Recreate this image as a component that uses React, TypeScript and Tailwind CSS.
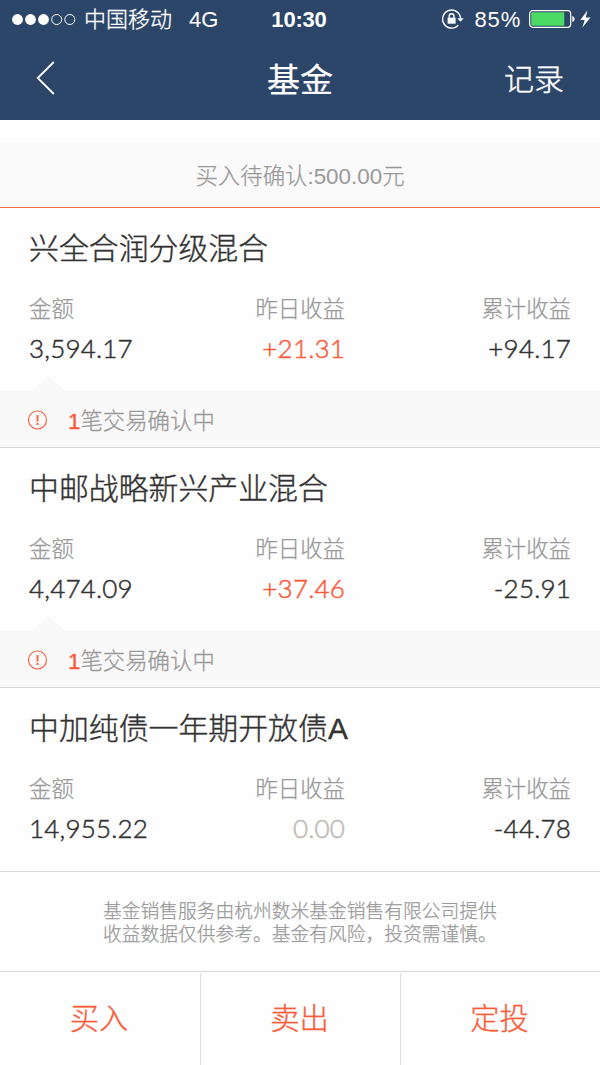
type Fund = {
  name: string;
  amount: string;
  yesterday: string;
  total: string;
  pending?: number;
};

const funds: Fund[] = [
  { name: "兴全合润分级混合", amount: "3,594.17", yesterday: "+21.31", total: "+94.17", pending: 1 },
  { name: "中邮战略新兴产业混合", amount: "4,474.09", yesterday: "+37.46", total: "-25.91", pending: 1 },
  { name: "中加纯债一年期开放债A", amount: "14,955.22", yesterday: "0.00", total: "-44.78" },
];

const StatusBar = () => {
  return (
    <div className="relative flex h-10 items-center justify-between pl-3 pr-[9px] text-[22px] leading-10">
      <div className="flex items-center">
        <svg width="64" height="12" viewBox="0 0 64 12" fill="white">
          <circle cx="5.5" cy="5.5" r="5.4" />
          <circle cx="18.5" cy="5.5" r="5.4" />
          <circle cx="31.5" cy="5.5" r="5.4" />
          <circle cx="44.7" cy="5.5" r="5" fill="none" stroke="white" />
          <circle cx="57.8" cy="5.5" r="5" fill="none" stroke="white" />
        </svg>
        <span className="ml-2 font-light [-webkit-text-stroke:0.3px]">中国移动</span>
        <span className="ml-[17px]">4G</span>
      </div>
      <div className="absolute inset-x-0 -ml-0.5 text-center font-bold -tracking-[0.2px]">10:30</div>
      <div className="flex items-center">
        <svg className="-ml-0.5 overflow-visible" width="22" height="20" viewBox="0 0 22 20" fill="none" stroke="white" strokeWidth="1.4">
          <path d="M18.6 8.5A9 9 0 1 0 16.3 15.1" />
          <path d="M15.3 8.2h6.4l-3.2 3.6z" fill="white" stroke="none" />
          <rect x="5.6" y="7.7" width="8" height="6" fill="white" stroke="none" />
          <path d="M7.2 8V6.2a2.4 2.4 0 0 1 4.8 0V8" />
        </svg>
        <span className="ml-[11px] mr-0.5 tracking-[0.8px]">85%</span>
        <svg className="ml-[6px]" width="62" height="20" viewBox="0 0 62 20">
          <rect x="0.7" y="0.7" width="41" height="16.6" rx="3" fill="none" stroke="white" strokeWidth="1.2" />
          <rect x="2.3" y="2.3" width="33" height="13.4" rx="1" fill="#4cd964" />
          <path d="M43.3 6c3 .8 3 5.2 0 6z" fill="white" />
          <path d="M58.4 0.5 51.3 10h4.4l-2.3 7.5L61.5 7.4h-4.8z" fill="white" />
        </svg>
      </div>
    </div>
  );
};

const Header = () => {
  return (
    <div className="h-[120px] bg-[#2c466a] text-white">
      <StatusBar />
      <div className="grid h-20 grid-cols-3 items-center px-9">
        <svg className="-mt-1" width="19" height="34" viewBox="0 0 19 34" fill="none" stroke="white" strokeWidth="1.8">
          <path d="M17.8 1 1.7 17l16.1 16" />
        </svg>
        <div className="pt-0.5 text-center text-[33px] font-normal leading-10 [-webkit-text-stroke:0.2px]">基金</div>
        <div className="text-right text-[30px] leading-10 font-light [-webkit-text-stroke:0.4px]">记录</div>
      </div>
    </div>
  );
};

const Pending = ({ count }: { count: number }) => {
  return (
    <div className="relative flex h-[57px] items-center border-b border-[#d9d9d9] bg-[#f9f9f9] pl-7 pt-1">
      <svg className="absolute -top-[15px] left-8" width="33" height="15" viewBox="0 0 33 15">
        <path d="M0 15 16.5 0 33 15z" fill="#f9f9f9" />
      </svg>
      <svg className="overflow-visible" width="20" height="20" viewBox="0 0 20 20" fill="none" stroke="#fa5b3a">
        <circle cx="9.5" cy="9" r="9" strokeWidth="1.1" />
        <path d="M9.5 4v6.4M9.5 12v2" strokeWidth="1.8" />
      </svg>
      <div className="ml-5 flex pt-0.5 text-[22.4px] leading-8 text-[#999]">
        <span className="text-[#fa5b3a] [-webkit-text-stroke:0.4px]">{count}</span>
        <span className="font-light [-webkit-text-stroke:0.3px]">笔交易确认中</span>
      </div>
    </div>
  );
};

const FundItem = ({ fund }: { fund: Fund }) => {
  return (
    <div>
      <div className="h-[183px] px-[29px] pt-[21px] text-[#333]">
        <div className="text-[29.9px] leading-10 font-light [-webkit-text-stroke:0.4px]">{fund.name}</div>
        <div className="mt-[25px] grid grid-cols-[143px_173px_1fr] text-[22.4px] leading-8 font-light text-[#999] [-webkit-text-stroke:0.25px]">
          <div>金额</div>
          <div className="text-right">昨日收益</div>
          <div className="text-right">累计收益</div>
        </div>
        <div className="mt-1 grid grid-cols-[143px_173px_1fr] font-[Lato] text-[26px] leading-9 font-light tracking-[0.2px] [-webkit-text-stroke:0.5px]">
          <div>{fund.amount}</div>
          <div className={fund.yesterday === "0.00" ? "text-right text-[#bfb8b4]" : "text-right text-[#fa5b3a]"}>
            {fund.yesterday}
          </div>
          <div className="text-right">{fund.total}</div>
        </div>
      </div>
      {fund.pending ? <Pending count={fund.pending} /> : <div className="h-px bg-[#d9d9d9]" />}
    </div>
  );
};

const App = () => {
  return (
    <div
      lang="zh-CN"
      className="flex h-[1065px] w-[600px] flex-col overflow-hidden bg-[#fefefe] font-['Liberation_Sans','Noto_Sans_CJK_SC',sans-serif]"
    >
      <Header />
      <div className="mt-[22px] flex h-[65px] items-center justify-center bg-[#fafafa] pt-1 text-[22.4px] text-[#999]">
        <span className="font-light [-webkit-text-stroke:0.25px]">买入待确认</span>
        <span>:500.00</span>
        <span className="font-light [-webkit-text-stroke:0.25px]">元</span>
      </div>
      <div className="h-px bg-[#f96c4b]" />
      {funds.map((fund) => (
        <FundItem key={fund.name} fund={fund} />
      ))}
      <div className="h-[99px] pl-[103px] pt-7 text-[18.75px] leading-[23px] font-light text-[#999] [-webkit-text-stroke:0.25px]">
        <div>基金销售服务由杭州数米基金销售有限公司提供</div>
        <div>收益数据仅供参考。基金有风险，投资需谨慎。</div>
      </div>
      <div className="flex h-[94px] border-t border-[#d9d9d9] pt-px text-center text-[29.3px] leading-[92px] font-light text-[#fa5b3a] [-webkit-text-stroke:0.3px]">
        <div className="w-[201px] border-r border-[#dedede] pr-0.5">买入</div>
        <div className="w-[200px] border-r border-[#dedede] pr-0.5">卖出</div>
        <div className="flex-1 pr-0.5">定投</div>
      </div>
    </div>
  );
};

export default App;
